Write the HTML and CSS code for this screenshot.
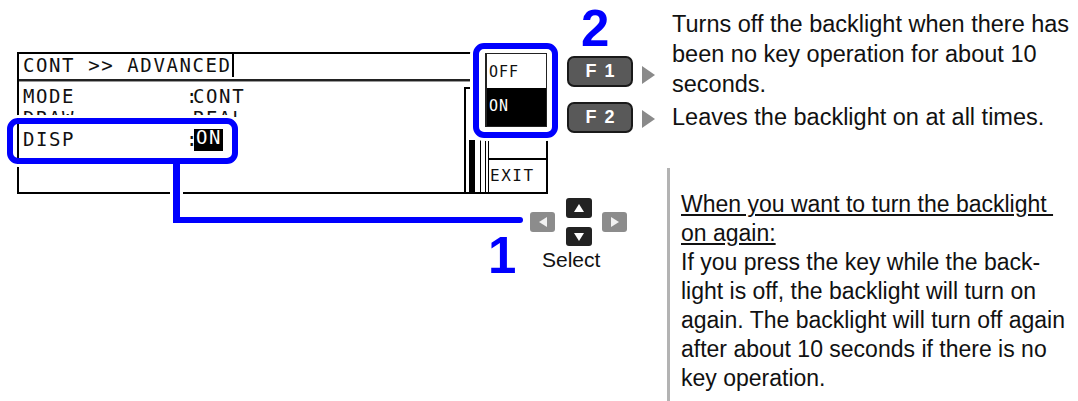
FILE: index.html
```html
<html>
<head>
<link rel="stylesheet" href="styles.css">
</head>
<body>
<div class="figure">

<div class="lcd">
<div class="lcd-title"><span class="title-box">CONT &gt;&gt; ADVANCED</span></div>
<div class="lcd-body">
<div class="lcd-rows">
<div class="row"><span class="name">MODE</span><span class="colon">:</span>CONT</div>
<div class="row cut"><span class="name">DRAW</span><span class="colon">:</span>REAL</div>
<div class="row"><span class="name">DISP</span><span class="colon">:</span><b class="inv">ON</b></div>
</div>
<div class="scroll"><div class="track"><div class="thumb"></div></div></div>
<div class="softkeys">
<div class="softkey k1"></div>
<div class="softkey k2"></div>
<div class="softkey k3"></div>
<div class="softkey exit">EXIT</div>
</div>
</div>
</div>

<div class="hl-disp"></div>
<div class="lead-v"></div>
<div class="lead-h"></div>

<div class="popup">
<div class="menu">
<div class="opt off">OFF</div>
<div class="opt on">ON</div>
</div>
</div>

<div class="step step-2">2</div>
<div class="step step-1">1</div>

<div class="fn">
<span class="fkey">F 1</span>
<span class="arrow a1"></span>
<p class="fn-text">Turns off the backlight when there has<br>been no key operation for about 10<br>seconds.</p>
<span class="fkey k-2">F 2</span>
<span class="arrow a2"></span>
<p class="fn-text">Leaves the backlight on at all times.</p>
</div>

<div class="cursor">
<div class="pad">
<span class="ck side left"></span>
<div class="updown"><span class="ck up"></span><span class="ck down"></span></div>
<span class="ck side right"></span>
</div>
<div class="cursor-label">Select</div>
</div>

<div class="note">
<p><u>When you want to turn the backlight&nbsp;</u><br><u>on again:</u><br>If you press the key while the back-<br>light is off, the backlight will turn on<br>again. The backlight will turn off again<br>after about 10 seconds if there is no<br>key operation.</p>
</div>

</div>
</body>
</html>
```

FILE: styles.css
```css
body {
    margin: 0;
    background-color: #fff;
    color: #111;
    font-family: "Liberation Sans", Arial, sans-serif;
}
p {
    margin: 0;
}
.figure {
    position: relative;
    width: 1078px;
    height: 401px;
    overflow: hidden;
}

/* LCD screen */
.lcd {
    position: absolute;
    left: 17px;
    top: 52px;
    width: 531px;
    height: 142px;
    box-sizing: border-box;
    display: flex;
    flex-direction: column;
    border: 2px #000 solid;
    font-family: "DejaVu Sans Mono", monospace;
    font-size: 19px;
    color: #111;
}
.lcd-title {
    display: flex;
    height: 25px;
    border-bottom: 2px #222 solid;
    box-shadow: 0 1px 0 #999;
}
.title-box {
    height: 23px;
    padding: 0 0 0 4px;
    line-height: 23px;
    letter-spacing: 1.6px;
    border-right: 2px #000 solid;
}
.lcd-body {
    flex: 1;
    display: flex;
}
.lcd-rows {
    flex: 1;
    padding: 5px 0 0 4px;
    letter-spacing: 1.6px;
}
.row {
    display: flex;
    height: 21.5px;
    line-height: 21.5px;
    white-space: pre;
}
.row.cut {
    height: 9px;
    margin-bottom: 12.5px;
    overflow: hidden;
}
.row .name {
    width: 163px;
}
.colon {
    letter-spacing: -4.4px;
}
.inv {
    display: inline-block;
    margin-left: 1px;
    padding: 0 1px 0 2px;
    line-height: 16px;
    font-weight: normal;
    color: #fff;
    background-color: #000;
}
.scroll {
    flex: none;
    display: flex;
    width: 22px;
    padding-top: 6px;
    box-sizing: border-box;
}
.track {
    display: flex;
    flex-direction: column;
    justify-content: flex-end;
    width: 14px;
    margin-left: 1px;
    border-left: 2px #000 solid;
    border-top: 2px #000 solid;
    border-right: 1px #000 solid;
}
.thumb {
    width: 6px;
    height: 52px;
    margin-left: 3px;
    background-color: #000;
}
.softkeys {
    flex: none;
    display: flex;
    flex-direction: column;
    width: 61px;
    box-sizing: border-box;
    border-left: 4px #000 double;
}
.softkey {
    box-sizing: border-box;
    border-bottom: 2px #000 solid;
}
.softkey.k1,
.softkey.k2 {
    height: 30px;
}
.softkey.k3 {
    height: 19px;
}
.softkey.exit {
    flex: 1;
    padding: 2px 0 0 1px;
    border-bottom: 0;
    font-size: 16px;
    line-height: 28px;
    letter-spacing: 1.5px;
}

/* blue callouts */
.hl-disp {
    position: absolute;
    left: 7px;
    top: 118px;
    width: 231px;
    height: 46px;
    box-sizing: border-box;
    border: 6px #0000fe solid;
    border-radius: 11px;
    box-shadow: 0 0 0 3px #fff;
}
.lead-v {
    position: absolute;
    left: 173px;
    top: 164px;
    width: 7px;
    height: 59px;
    background-color: #0000fe;
    box-shadow: 3px 0 0 #fff, -3px 0 0 #fff;
}
.lead-h {
    position: absolute;
    left: 173px;
    top: 217px;
    width: 350px;
    height: 6px;
    border-radius: 0 3px 3px 0;
    background-color: #0000fe;
}
.popup {
    position: absolute;
    left: 473px;
    top: 43px;
    width: 85px;
    height: 95px;
    box-sizing: border-box;
    padding: 4px 5px 5px 6px;
    background-color: #fff;
    border: 6px #0000fe solid;
    border-radius: 11px;
    box-shadow: 0 0 0 3px #fff;
}
.menu {
    display: flex;
    flex-direction: column;
    height: 100%;
    box-sizing: border-box;
    border: 1px #222 solid;
    border-left-width: 2px;
    font-family: "DejaVu Sans Mono", monospace;
    font-size: 15px;
    letter-spacing: 1px;
}
.opt {
    padding: 3px 0 0 2px;
    line-height: 30px;
}
.opt.off {
    height: 34px;
    box-sizing: border-box;
}
.opt.on {
    flex: 1;
    color: #fff;
    background-color: #000;
}
.step {
    position: absolute;
    font-size: 51px;
    font-weight: bold;
    line-height: 57px;
    color: #0000fe;
}
.step-2 {
    left: 581px;
    top: 0;
}
.step-1 {
    left: 488px;
    top: 227px;
}

/* function keys */
.fn {
    position: absolute;
    left: 567px;
    top: 9px;
    display: grid;
    grid-template-columns: 66px 39px auto;
    row-gap: 3px;
    font-size: 23.5px;
    line-height: 30px;
}
.fkey {
    height: 31px;
    margin-top: 47px;
    box-sizing: border-box;
    border: 2px #1a1a1a solid;
    border-radius: 7px;
    background-color: #595959;
    color: #fff;
    font-size: 18px;
    font-weight: bold;
    line-height: 27px;
    text-align: center;
    word-spacing: 3px;
    white-space: pre;
}
.fkey.k-2 {
    margin-top: 0;
}
.arrow {
    width: 0;
    height: 0;
    margin-left: 9px;
    border-left: 13px #8a8a8a solid;
    border-top: 9px transparent solid;
    border-bottom: 9px transparent solid;
}
.arrow.a1 {
    margin-top: 57px;
}
.arrow.a2 {
    margin-top: 8px;
}
.fn-text {
    white-space: nowrap;
}

/* cursor keys */
.cursor {
    position: absolute;
    left: 530px;
    top: 198px;
}
.pad {
    display: flex;
    align-items: center;
}
.updown {
    display: flex;
    flex-direction: column;
    gap: 9px;
    margin: 0 10px 0 11px;
}
.ck {
    position: relative;
    display: block;
    width: 26px;
    border-radius: 3px;
}
.ck.up {
    height: 20px;
    background-color: #222;
}
.ck.down {
    height: 19px;
    background-color: #222;
}
.ck.side {
    width: 25px;
    height: 20px;
    background-color: #8c8c8c;
}
.ck:before {
    content: '';
    position: absolute;
    left: 50%;
    top: 50%;
    width: 0;
    height: 0;
}
.ck.up:before {
    margin: -4px 0 0 -5px;
    border-bottom: 8px #fff solid;
    border-left: 5px transparent solid;
    border-right: 5px transparent solid;
}
.ck.down:before {
    margin: -4px 0 0 -5px;
    border-top: 8px #fff solid;
    border-left: 5px transparent solid;
    border-right: 5px transparent solid;
}
.ck.left:before {
    margin: -5px 0 0 -4px;
    border-right: 8px #f2f2f2 solid;
    border-top: 5px transparent solid;
    border-bottom: 5px transparent solid;
}
.ck.right:before {
    margin: -5px 0 0 -4px;
    border-left: 8px #f2f2f2 solid;
    border-top: 5px transparent solid;
    border-bottom: 5px transparent solid;
}
.cursor-label {
    margin: 2px 0 0 12px;
    font-size: 21px;
    line-height: 24px;
}

/* note */
.note {
    position: absolute;
    left: 667px;
    top: 168px;
    right: 0;
    bottom: 0;
    padding: 22px 0 0 11px;
    border-left: 3px #b3b3b3 solid;
    font-size: 23px;
    line-height: 29px;
    white-space: nowrap;
}
.note u {
    text-underline-offset: 2px;
}
```
